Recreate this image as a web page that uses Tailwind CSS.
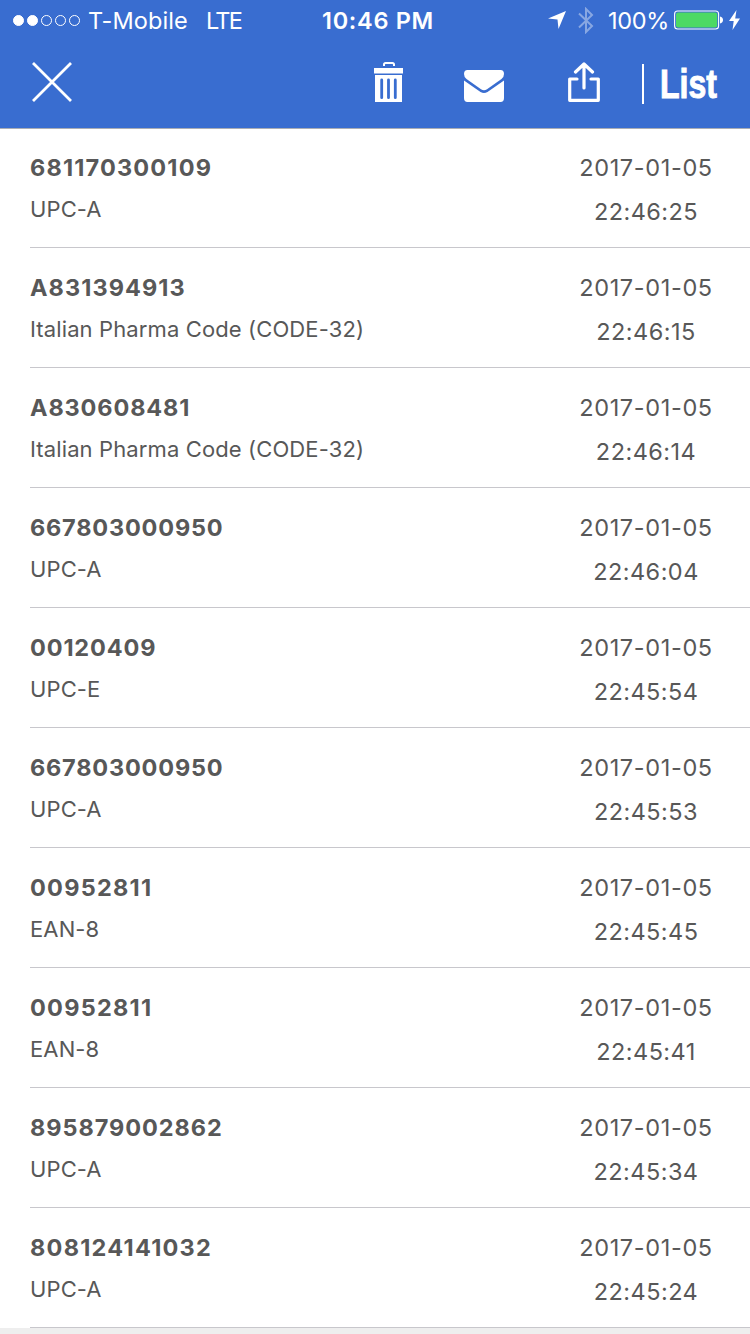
<!DOCTYPE html>
<html lang="en">
<head>
<meta charset="utf-8">
<title>Scan history</title>
<script src="https://cdn.jsdelivr.net/npm/@tailwindcss/browser@4"></script>
</head>
<body class="w-[750px] h-[1334px] overflow-hidden bg-[#eeeeee] font-['Inter',sans-serif] text-[#585858]">
<header class="h-32 bg-[#396dd0] text-white">
  <div class="relative flex h-10 items-center text-[23.5px] leading-10">
    <svg class="ml-3 w-[69px] h-4 shrink-0" viewBox="0 0 69 16" fill="none" stroke="#fff" stroke-width="1">
      <circle cx="6.5" cy="8.5" r="5" fill="#fff"/><circle cx="20.5" cy="8.5" r="5" fill="#fff"/>
      <circle cx="34.5" cy="8.5" r="5"/><circle cx="48.5" cy="8.5" r="5"/><circle cx="62.5" cy="8.5" r="5"/>
    </svg>
    <span class="ml-[7px] w-[118px] pt-px whitespace-nowrap tracking-[0.1px]">T-Mobile</span>
    <span class="pt-px tracking-[-1.7px]">LTE</span>
    <span class="absolute left-[322px] top-0 pt-px font-semibold whitespace-nowrap tracking-[0.7px]">10:46 PM</span>
    <div class="ml-auto flex items-center">
      <svg class="w-[18px] h-[18px]" viewBox="0 0 18 18" fill="#fff"><path d="M18 0 10.5 18 9.5 8.5 0 7.6Z"/></svg>
      <svg class="ml-[12px] w-4 h-[27px] opacity-40" viewBox="0 0 16 27" fill="none" stroke="#fff" stroke-width="2"><path d="M1 6.5 14 19 8 25V2l6 6L1 20.5"/></svg>
      <span class="ml-3.5 w-[66px] pt-px whitespace-nowrap tracking-[-0.3px]">100%</span>
      <svg class="w-[49px] h-5" viewBox="0 0 49 20"><rect x=".6" y="1" width="44" height="18" rx="3" fill="none" stroke="#fff" stroke-width="1.1"/><rect x="2" y="2.4" width="41.2" height="15.2" rx="2" fill="#4cd964"/><path d="M46 6.5q3 .8 3 3.5t-3 3.5Z" fill="#fff"/></svg>
      <svg class="ml-[6px] mr-[10px] w-[11px] h-5" viewBox="0 0 11 20" fill="#fff"><path d="M7.5 0 0 11h4.7L3.5 20 11 8.5H6.2Z"/></svg>
    </div>
  </div>
  <div class="flex h-[88px] items-start pt-[22px] pl-8">
    <svg class="w-10 h-10" viewBox="0 0 40 40" stroke="#fff" stroke-width="2.8" stroke-linecap="butt"><path d="M1 1 39 39M39 1 1 39"/></svg>
    <svg class="ml-[302px] w-[30px] h-10" viewBox="0 0 30 40"><path d="M10 4V2.6Q10 1 11.6 1H18.4Q20 1 20 2.6V4" fill="none" stroke="#fff" stroke-width="2"/><path d="M0 6H29V11.4H0ZM1 13H28V40H1Z" fill="#fff"/><path d="M7.7 18V35.7M14.5 18V35.7M21.3 18V35.7" stroke="#396dd0" stroke-width="2.8" stroke-linecap="round"/></svg>
    <svg class="ml-[60px] w-10 h-10" viewBox="0 0 40 40" fill="#fff"><path d="M3.5 8H36.5Q40 8 40 12Q40 15 37.5 17L23 27.2Q20 29.2 17 27.2L2.5 17Q0 15 0 12Q0 8 3.5 8Z"/><path d="M0 18.5 16.5 30Q20 32.2 23.5 30L40 18.5V36Q40 40 36.5 40H3.5Q0 40 0 36Z"/></svg>
    <svg class="ml-16 w-8 h-10" viewBox="0 0 32 40" fill="none" stroke="#fff" stroke-width="3.2" stroke-linecap="round" stroke-linejoin="round"><path d="M9 17H1.7V38.3H30.3V17H23M16 26V2M7.5 10 16 2 24.5 10"/></svg>
    <div class="ml-[42px] mt-[2px] h-10 w-0.5 bg-white"></div>
    <span class="ml-[16px] mt-[2px] h-10 leading-10 text-[40.5px] font-bold font-['Liberation_Sans',sans-serif] origin-left scale-x-[0.79] [-webkit-text-stroke:1px_white]">List</span>
  </div>
</header>
<main class="relative h-[1200px] bg-white">
  <div class="absolute inset-x-0 top-0 h-px bg-[#a9adb5]"></div>
  <ul id="scans"></ul>
</main>
<script>
const scans = [
  ['681170300109', 'UPC-A', '22:46:25', 'tracking-[1.17px]'],
  ['A831394913', 'Italian Pharma Code (CODE-32)', '22:46:15', 'tracking-[1.07px]'],
  ['A830608481', 'Italian Pharma Code (CODE-32)', '22:46:14', 'tracking-[0.87px]'],
  ['667803000950', 'UPC-A', '22:46:04', 'tracking-[0.8px]'],
  ['00120409', 'UPC-E', '22:45:54', 'tracking-[0.85px]'],
  ['667803000950', 'UPC-A', '22:45:53', 'tracking-[0.8px]'],
  ['00952811', 'EAN-8', '22:45:45', 'tracking-[1.25px]'],
  ['00952811', 'EAN-8', '22:45:41', 'tracking-[1.25px]'],
  ['895879002862', 'UPC-A', '22:45:34', 'tracking-[0.95px]'],
  ['808124141032', 'UPC-A', '22:45:24', 'tracking-[1.25px]'],
];
document.getElementById('scans').innerHTML = scans.map(([code, kind, time, tracking]) => `
  <li class="ml-[30px] flex h-[120px] justify-between border-b border-[#c8c7cc] pt-[18px] pr-[34px]">
    <div>
      <div class="text-[23.5px] leading-[44px] font-bold ${tracking}">${code}</div>
      <div class="text-[22px] leading-[39px] tracking-[0.12px]">${kind}</div>
    </div>
    <div class="w-[140px] text-center text-[23.5px] leading-[44px]">
      <div class="tracking-[0.65px]">2017-01-05</div>
      <div class="tracking-[0.45px]">${time}</div>
    </div>
  </li>`).join('');
</script>
</body>
</html>
